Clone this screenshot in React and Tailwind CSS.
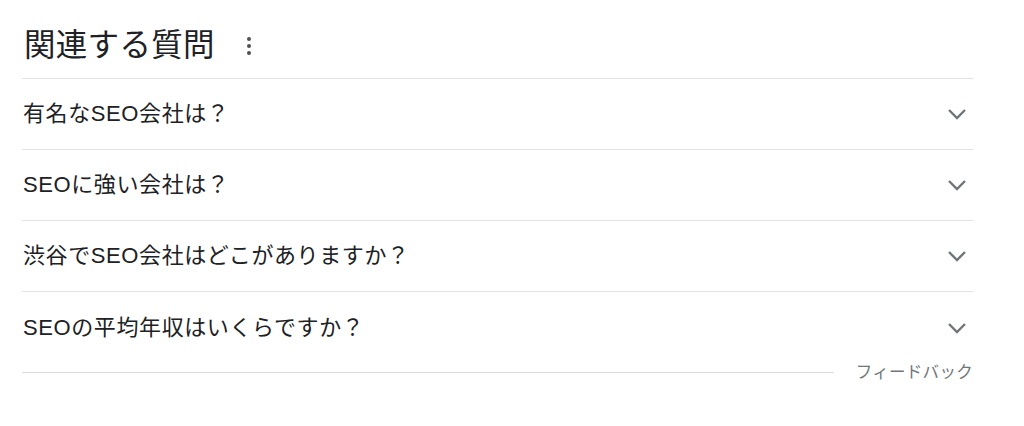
export default function App() {
  const font = { fontFamily: '"Liberation Sans", "Noto Sans CJK JP", sans-serif' };
  const qs = [
    "有名なSEO会社は？",
    "SEOに強い会社は？",
    "渋谷でSEO会社はどこがありますか？",
    "SEOの平均年収はいくらですか？",
  ];
  return (
    <div className="w-[1024px] h-[426px] bg-white" style={font}>
      <div className="ml-[22px] w-[951px]">
        <div className="flex items-center pt-[25px] pb-[13px] border-b border-[#e3e3e3]">
          <span className="text-[31.5px] leading-[40px] text-[#202124] pl-[2px] tracking-[0.3px]">関連する質問</span>
          <span className="ml-[32px] flex flex-col items-center gap-[3px] pt-[2px]">
            <span className="w-[4px] h-[4px] rounded-full bg-[#4d5156]"></span>
            <span className="w-[4px] h-[4px] rounded-full bg-[#4d5156]"></span>
            <span className="w-[4px] h-[4px] rounded-full bg-[#4d5156]"></span>
          </span>
        </div>
        {qs.map((q, i) => (
          <div
            key={i}
            className={
              i < qs.length - 1
                ? "flex items-center justify-between h-[71px] border-b border-[#e3e3e3]"
                : "flex items-center justify-between h-[70px] pt-[2px]"
            }
          >
            <span className="text-[22px] leading-[30px] text-[#202124] pl-[1px] tracking-[0.6px]">{q}</span>
            <svg width="20" height="13" viewBox="0 0 20 13" className="mr-[6px]">
              <polyline points="2,2 10,10 18,2" fill="none" stroke="#70757a" strokeWidth="2.4" />
            </svg>
          </div>
        ))}
        <div className="flex items-center h-[20px]">
          <div className="flex-1 h-px bg-[#dadce0]"></div>
          <span className="ml-[22px] text-[16.5px] leading-[20px] text-[#70757a] tracking-[0.3px]">フィードバック</span>
        </div>
      </div>
    </div>
  );
}
